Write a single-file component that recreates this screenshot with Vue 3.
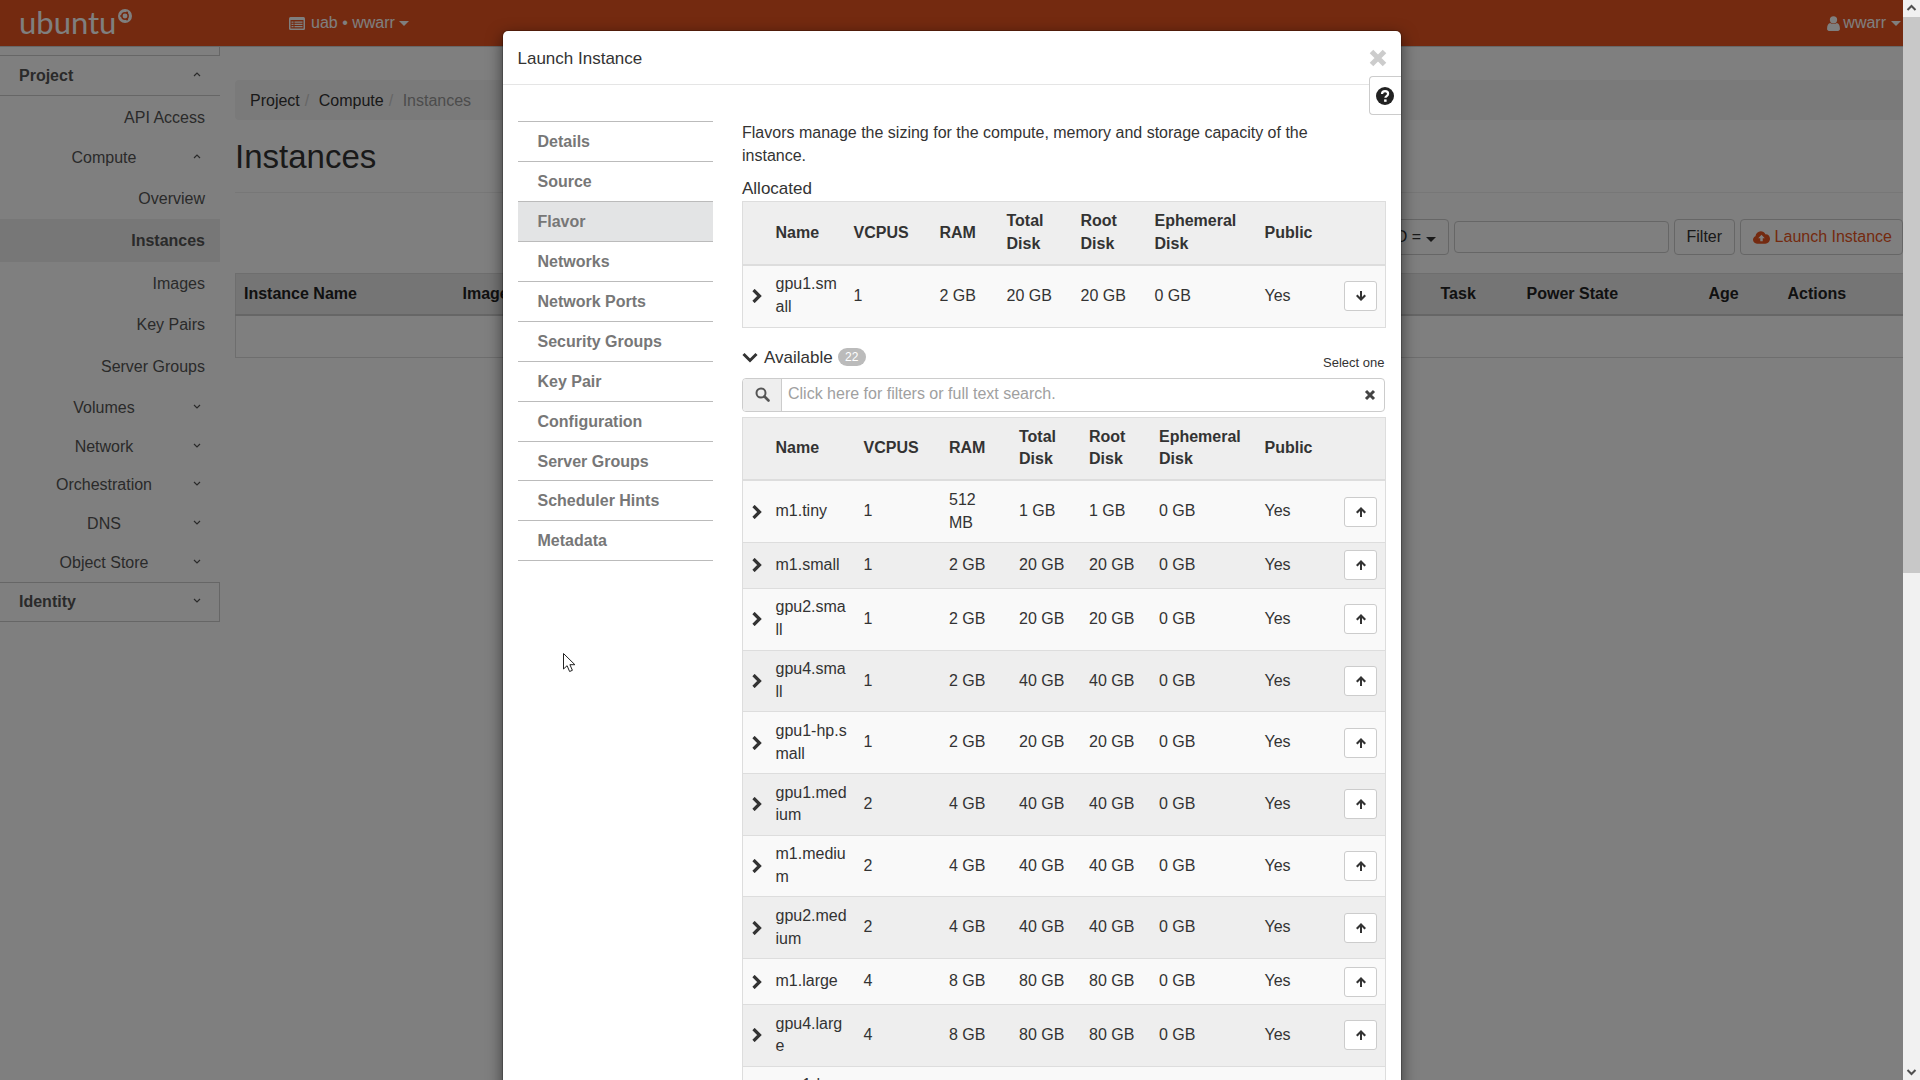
<script setup>
const sideItems = [
  { label: 'API Access', kind: 'link', h: 41 },
  { label: 'Compute', kind: 'group', open: true, h: 40 },
  { label: 'Overview', kind: 'link', h: 42 },
  { label: 'Instances', kind: 'link', active: true, h: 43 },
  { label: 'Images', kind: 'link', h: 41 },
  { label: 'Key Pairs', kind: 'link', h: 42 },
  { label: 'Server Groups', kind: 'link', h: 42 },
  { label: 'Volumes', kind: 'group', h: 40 },
  { label: 'Network', kind: 'group', h: 38 },
  { label: 'Orchestration', kind: 'group', h: 38 },
  { label: 'DNS', kind: 'group', h: 39 },
  { label: 'Object Store', kind: 'group', h: 40 },
]

const mainCols = [
  { label: 'Instance Name', w: 219 },
  { label: 'Image Name', w: 978 },
  { label: 'Task', w: 86 },
  { label: 'Power State', w: 182 },
  { label: 'Age', w: 79 },
  { label: 'Actions', w: 124 },
]

const steps = ['Details', 'Source', 'Flavor', 'Networks', 'Network Ports', 'Security Groups', 'Key Pair', 'Configuration', 'Server Groups', 'Scheduler Hints', 'Metadata']

const allocCols = [25, 78, 86, 67, 74, 74, 110, 78, 51]
const availCols = [25, 88, 85.5, 70, 70, 70, 105.5, 78, 51]

const flavors = [
  ['m1.tiny', 1, '512 MB', '1 GB', '1 GB'],
  ['m1.small', 1, '2 GB', '20 GB', '20 GB'],
  ['gpu2.small', 1, '2 GB', '20 GB', '20 GB'],
  ['gpu4.small', 1, '2 GB', '40 GB', '40 GB'],
  ['gpu1-hp.small', 1, '2 GB', '20 GB', '20 GB'],
  ['gpu1.medium', 2, '4 GB', '40 GB', '40 GB'],
  ['m1.medium', 2, '4 GB', '40 GB', '40 GB'],
  ['gpu2.medium', 2, '4 GB', '40 GB', '40 GB'],
  ['m1.large', 4, '8 GB', '80 GB', '80 GB'],
  ['gpu4.large', 4, '8 GB', '80 GB', '80 GB'],
  ['gpu1-hp.medium', 2, '4 GB', '40 GB', '40 GB'],
]
</script>

<template>
  <div class="app">
    <div class="screen">
      <header class="navbar">
        <div class="brand">
          <span class="brand-name">ubuntu</span>
          <svg class="brand-mark" width="14" height="14" viewBox="0 0 14 14">
            <circle cx="7" cy="7" r="7" fill="#fff" />
            <circle cx="7" cy="7" r="3.2" fill="none" stroke="#e95420" stroke-width="1.5" />
            <circle cx="3.2" cy="7" r="1.1" fill="#e95420" />
            <circle cx="9" cy="3.6" r="1.1" fill="#e95420" />
            <circle cx="9" cy="10.4" r="1.1" fill="#e95420" />
          </svg>
        </div>
        <div class="nav-project">
          <svg width="16" height="13" viewBox="0 0 16 13">
            <rect width="16" height="13" rx="1.5" fill="#fff" />
            <path d="M1.5 3h13v8.5h-13z" fill="#e95420" />
            <path d="M2.5 4.5h2v1.2h-2zM5.5 4.5h8v1.2h-8zM2.5 6.8h2V8h-2zM5.5 6.8h8V8h-8zM2.5 9h2v1.2h-2zM5.5 9h8v1.2h-8z" fill="#fff" />
          </svg>
          <span>uab • wwarr</span>
          <i class="caret"></i>
        </div>
        <div class="nav-user">
          <svg width="13" height="15" viewBox="0 0 12 14">
            <circle cx="6" cy="3.6" r="3.4" fill="#fff" />
            <path d="M0 12.2c0-3.2.8-5.2 2.8-5.6 1.8 1.2 4.6 1.2 6.4 0 2 .4 2.8 2.4 2.8 5.6 0 1-.8 1.8-1.8 1.8H1.8C.8 14 0 13.2 0 12.2z" fill="#fff" />
          </svg>
          <span>wwarr</span>
          <i class="caret"></i>
        </div>
      </header>

      <div class="page">
        <aside class="sidebar">
          <div class="side-top"></div>
          <div class="side-head">
            <span>Project</span>
            <svg class="chev" width="8" height="5" viewBox="0 0 8 5"><path d="M1 4l3-3 3 3" /></svg>
          </div>
          <div
            v-for="item in sideItems"
            :key="item.label"
            class="side-row"
            :class="[`side-${item.kind}`, { 'is-active': item.active }]"
            :style="{ height: item.h + 'px' }"
          >
            <span class="side-label">{{ item.label }}</span>
            <svg v-if="item.kind === 'group'" class="chev" width="8" height="5" viewBox="0 0 8 5">
              <path :d="item.open ? 'M1 4l3-3 3 3' : 'M1 1l3 3 3-3'" />
            </svg>
          </div>
          <div class="side-head side-closed">
            <span>Identity</span>
            <svg class="chev" width="8" height="5" viewBox="0 0 8 5"><path d="M1 1l3 3 3-3" /></svg>
          </div>
        </aside>

        <main class="main">
          <div class="crumbs">
            <span>Project</span><i>/</i><span>Compute</span><i>/</i><span class="muted">Instances</span>
          </div>
          <h1 class="title">Instances</h1>
          <div class="toolbar">
            <button class="btn">Instance ID = <i class="caret"></i></button>
            <input class="filter-input" type="text" />
            <button class="btn">Filter</button>
            <button class="btn btn-launch">
              <svg width="17" height="13" viewBox="0 0 18 13">
                <path d="M4.2 13C2 13 0 11.2 0 8.9c0-1.7 1-3.2 2.6-3.8C3 2.3 5.3 0 8.2 0c2.2 0 4.100 1.300 5 3.200 2.700-.2 4.800 1.900 4.800 4.700 0 2.800-2.200 5.100-5 5.100z" fill="#e95420" />
                <path d="M9 3.500l3.500 3.700h-2.200v3.300H7.700V7.200H5.500z" fill="#fff" />
              </svg>
              Launch Instance
            </button>
          </div>
          <table class="main-table">
            <colgroup>
              <col v-for="col in mainCols" :key="col.label" :style="{ width: col.w + 'px' }" />
            </colgroup>
            <thead>
              <tr><th v-for="col in mainCols" :key="col.label">{{ col.label }}</th></tr>
            </thead>
            <tbody>
              <tr><td :colspan="mainCols.length"></td></tr>
            </tbody>
          </table>
        </main>
      </div>

      <div class="backdrop"></div>

      <div class="modal-wrap">
        <div class="modal">
          <div class="modal-head">
            <span class="modal-title">Launch Instance</span>
            <svg class="close-x" width="18" height="18" viewBox="0 0 18 18"><path d="M2.500 2.500l13 13M15.500 2.500l-13 13" /></svg>
          </div>
          <button class="help">
            <svg width="18" height="18" viewBox="0 0 18 18">
              <circle cx="9" cy="9" r="9" fill="#222" />
              <path d="M6 7c0-1.800 1.300-2.800 3.100-2.800 1.700 0 3 1 3 2.600 0 2.200-2.700 2.200-2.700 4" fill="none" stroke="#fff" stroke-width="2.200" />
              <rect x="8.100" y="12.400" width="2.500" height="2.400" fill="#fff" />
            </svg>
          </button>
          <div class="modal-body">
            <ul class="steps">
              <li v-for="step in steps" :key="step" :class="{ current: step === 'Flavor' }">{{ step }}</li>
            </ul>
            <section class="flavor">
              <p class="intro">Flavors manage the sizing for the compute, memory and storage capacity of the instance.</p>
              <div class="section-label allocated">Allocated</div>
              <table class="flavor-table">
                <colgroup>
                  <col v-for="(w, i) in allocCols" :key="i" :style="{ width: w + 'px' }" />
                </colgroup>
                <thead>
                  <tr>
                    <th></th><th>Name</th><th>VCPUS</th><th>RAM</th><th>Total Disk</th><th>Root Disk</th><th>Ephemeral Disk</th><th>Public</th><th></th>
                  </tr>
                </thead>
                <tbody>
                  <tr>
                    <td class="expander">
                      <svg width="11" height="14" viewBox="0 0 11 14"><path d="M2.500 1L8.500 7l-6 6" /></svg>
                    </td>
                    <td class="name">gpu1.small</td>
                    <td>1</td>
                    <td>2 GB</td>
                    <td>20 GB</td>
                    <td>20 GB</td>
                    <td>0 GB</td>
                    <td>Yes</td>
                    <td class="action">
                      <button class="move">
                        <svg width="12" height="12" viewBox="0 0 12 12"><path d="M6 11l5-5-1.500-1.500L7 7V1H5v6L2.500 4.500 1 6z" /></svg>
                      </button>
                    </td>
                  </tr>
                </tbody>
              </table>

              <div class="avail-head">
                <div class="avail-title">
                  <svg width="16" height="11" viewBox="0 0 16 11"><path d="M1.500 2L8 8.500 14.500 2" /></svg>
                  <span class="section-label">Available</span>
                  <span class="badge">22</span>
                </div>
                <span class="select-one">Select one</span>
              </div>
              <div class="search">
                <span class="search-addon">
                  <svg width="15" height="15" viewBox="0 0 15 15">
                    <circle cx="6" cy="6" r="4.500" fill="none" stroke="#555" stroke-width="2" />
                    <path d="M9.500 9.500l4 4" stroke="#555" stroke-width="2.600" stroke-linecap="round" />
                  </svg>
                </span>
                <span class="search-text">Click here for filters or full text search.</span>
                <svg class="search-clear" width="12" height="12" viewBox="0 0 12 12"><path d="M2 2l8 8M10 2l-8 8" /></svg>
              </div>
              <table class="flavor-table">
                <colgroup>
                  <col v-for="(w, i) in availCols" :key="i" :style="{ width: w + 'px' }" />
                </colgroup>
                <thead>
                  <tr>
                    <th></th><th>Name</th><th>VCPUS</th><th>RAM</th><th>Total Disk</th><th>Root Disk</th><th>Ephemeral Disk</th><th>Public</th><th></th>
                  </tr>
                </thead>
                <tbody>
                  <tr v-for="f in flavors" :key="f[0]">
                    <td class="expander">
                      <svg width="11" height="14" viewBox="0 0 11 14"><path d="M2.500 1L8.500 7l-6 6" /></svg>
                    </td>
                    <td class="name">{{ f[0] }}</td>
                    <td>{{ f[1] }}</td>
                    <td>{{ f[2] }}</td>
                    <td>{{ f[3] }}</td>
                    <td>{{ f[4] }}</td>
                    <td>0 GB</td>
                    <td>Yes</td>
                    <td class="action">
                      <button class="move">
                        <svg width="12" height="12" viewBox="0 0 12 12"><path d="M6 1L1 6l1.500 1.500L5 5v6h2V5l2.500 2.500L11 6z" /></svg>
                      </button>
                    </td>
                  </tr>
                </tbody>
              </table>
            </section>
          </div>
        </div>
      </div>

      <svg class="cursor" width="13" height="20" viewBox="0 0 13 20">
        <path d="M.5.500v15.500l3.600-3.300 2.500 5.800 2.800-1.200-2.500-5.600h5z" fill="#fff" stroke="#222" stroke-width="1" />
      </svg>
    </div>

    <div class="scrollbar">
      <svg class="sb-arrow" width="17" height="17" viewBox="0 0 17 17"><path d="M4.500 10l4-4 4 4" /></svg>
      <div class="sb-track"><div class="sb-thumb"></div></div>
      <svg class="sb-arrow" width="17" height="17" viewBox="0 0 17 17"><path d="M4.500 7l4 4 4-4" /></svg>
    </div>
  </div>
</template>

<style>
html,
body {
  margin: 0;
  overflow: hidden;
}
</style>

<style scoped>
.app {
  display: flex;
  width: 1920px;
  height: 1080px;
  overflow: hidden;
  background: #fff;
  color: #333;
  font-family: 'Liberation Sans', Arial, sans-serif;
  font-size: 16px;
  line-height: 1.42857;
}
.screen {
  position: relative;
  flex: 1;
  min-width: 0;
  overflow: hidden;
}

.navbar {
  display: flex;
  align-items: center;
  height: 47px;
  background: #e95420;
  color: #fff;
  border-bottom: 1px solid #d0d0d0;
  box-sizing: border-box;
  padding: 1px 0 0 19px;
}
.brand {
  display: flex;
  align-items: flex-start;
  width: 270px;
  height: 46px;
}
.brand-name {
  font-family: Lato, 'Open Sans', sans-serif;
  font-size: 31px;
  font-weight: 400;
  line-height: 42px;
}
.brand-mark {
  margin: 8px 0 0 2px;
}
.nav-project,
.nav-user {
  display: flex;
  align-items: center;
  gap: 6px;
}
.nav-project .caret {
  margin-left: -2px;
}
.nav-user {
  margin-left: auto;
  margin-right: 2px;
  gap: 3px;
}
.nav-user .caret {
  margin-left: 2px;
}
.caret {
  display: inline-block;
  width: 0;
  height: 0;
  border-top: 5px solid;
  border-left: 5px solid transparent;
  border-right: 5px solid transparent;
}

.page {
  display: flex;
}
.sidebar {
  width: 220px;
  flex: none;
  color: #555;
}
.side-top {
  height: 8px;
  border-bottom: 1px solid #ccc;
  border-right: 1px solid #ccc;
}
.side-head {
  display: flex;
  align-items: center;
  justify-content: space-between;
  height: 38px;
  padding: 1px 19px 0;
  border-bottom: 1px solid #ccc;
  font-weight: 700;
}
.side-closed {
  height: 37px;
  border: 1px solid #ccc;
  border-left: 0;
  padding-right: 18px;
}
.chev {
  fill: none;
  stroke: #555;
  stroke-width: 1.2;
  margin-top: -4px;
}
.side-row {
  display: flex;
  align-items: center;
  box-sizing: border-box;
  padding: 3px 15px 0 0;
}
.side-link {
  justify-content: flex-end;
}
.side-group {
  padding-right: 19px;
}
.side-group .side-label {
  flex: 1;
  margin-left: 15px;
  text-align: center;
}
.is-active {
  padding-top: 1px;
  background: #eee;
  font-weight: 700;
}

.main {
  flex: 1;
  min-width: 0;
  padding: 33px 0 0 15px;
}
.crumbs {
  display: flex;
  align-items: center;
  box-sizing: border-box;
  height: 40px;
  padding: 2px 0 0 15px;
  background: #f5f5f5;
  border-radius: 4px 0 0 4px;
}
.crumbs i {
  font-style: normal;
  color: #ccc;
  padding: 0 5px;
  margin-right: 4.5px;
}
.muted {
  color: #999;
}
.title {
  margin: 0;
  height: 72px;
  font-size: 33px;
  font-weight: 400;
  line-height: 74px;
  color: #333;
  border-bottom: 1px solid #eee;
}
.toolbar {
  display: flex;
  align-items: center;
  justify-content: flex-end;
  gap: 5px;
  margin-top: 26px;
  height: 36px;
}
.btn {
  height: 36px;
  padding: 0 12px;
  border: 1px solid #ccc;
  border-radius: 4px;
  background: #fff;
  color: #333;
  font: inherit;
  white-space: nowrap;
}
.btn-launch {
  display: flex;
  align-items: center;
  gap: 4.5px;
  padding-right: 10px;
  color: #e95420;
}
.filter-input {
  width: 215px;
  height: 32px;
  box-sizing: border-box;
  border: 1px solid #ccc;
  border-radius: 4px;
  background: #fff;
}
.main-table {
  width: 100%;
  margin-top: 18px;
  table-layout: fixed;
  border-collapse: collapse;
  border: 1px solid #ddd;
}
.main-table th {
  height: 40px;
  padding: 0 8px;
  background: #ebebeb;
  border-bottom: 2px solid #ccc;
  color: #222;
  text-align: left;
  white-space: nowrap;
  overflow: hidden;
}
.main-table td {
  height: 39px;
}

.backdrop {
  position: absolute;
  inset: 0;
  background: rgba(0, 0, 0, 0.5);
}
.modal-wrap {
  position: absolute;
  inset: 0;
  overflow: hidden;
}
.modal {
  position: relative;
  width: 900px;
  margin: 30px auto 0;
  box-sizing: border-box;
  background: #fff;
  border: 1px solid rgba(0, 0, 0, 0.2);
  border-radius: 6px;
  box-shadow: 0 5px 15px rgba(0, 0, 0, 0.5);
  background-clip: padding-box;
}
.modal-head {
  display: flex;
  align-items: center;
  justify-content: space-between;
  height: 54px;
  box-sizing: border-box;
  padding: 0 15px;
  border-bottom: 1px solid #e5e5e5;
}
.modal-title {
  margin-top: 3px;
  font-size: 17px;
}
.close-x {
  margin-right: -1px;
  fill: none;
  stroke: #ccc;
  stroke-width: 5;
}
.help {
  position: absolute;
  top: 45px;
  right: 0;
  display: flex;
  align-items: center;
  justify-content: center;
  width: 32px;
  height: 39px;
  padding: 0;
  background: #fff;
  border: 1px solid #ccc;
  border-right: 0;
  border-radius: 4px 0 0 4px;
}
.modal-body {
  display: flex;
  gap: 29.5px;
  padding: 36px 16px 0 15px;
}
.steps {
  flex: none;
  width: 195px;
  margin: 0;
  padding: 0;
  list-style: none;
  border-top: 1px solid #bbb;
  align-self: flex-start;
}
.steps li {
  height: 38.95px;
  padding-left: 20px;
  border-bottom: 1px solid #bbb;
  color: #777;
  font-weight: 700;
  line-height: 39px;
}
.steps .current {
  background: #e3e4e5;
}
.flavor {
  flex: 1;
  min-width: 0;
  padding-top: 1px;
}
.intro {
  max-width: 600px;
  margin: 0 0 10px;
}
.section-label {
  font-size: 17px;
  line-height: 23px;
}
.allocated {
  margin: -1px 0 1.5px;
}
.flavor-table {
  width: 100%;
  table-layout: fixed;
  border-collapse: collapse;
  border: 1px solid #ddd;
}
.flavor-table th {
  padding: 8px;
  background: #eee;
  border-bottom: 2px solid #ddd;
  text-align: left;
  font-weight: 700;
  vertical-align: middle;
}
.flavor-table td {
  padding: 7.5px 8px;
  border-top: 1px solid #ddd;
  vertical-align: middle;
  text-align: left;
}
.flavor-table tbody tr:nth-child(odd) {
  background: #f9f9f9;
}
.flavor-table tbody tr:nth-child(even) {
  background: #eee;
}
.flavor-table .name {
  word-break: break-all;
}
.flavor-table .expander {
  padding: 0 0 0 8px;
}
.expander svg {
  display: block;
  fill: none;
  stroke: #333;
  stroke-width: 3.2;
}
.flavor-table .action {
  padding: 7.5px 8px 7.5px 0;
  text-align: right;
}
.move {
  display: inline-flex;
  align-items: center;
  justify-content: center;
  width: 33px;
  height: 30px;
  padding: 0;
  vertical-align: middle;
  background: #fff;
  border: 1px solid #ccc;
  border-radius: 3px;
}
.move svg {
  fill: #333;
}
.avail-head {
  display: flex;
  align-items: flex-end;
  justify-content: space-between;
  margin-top: 18px;
}
.avail-title {
  display: flex;
  align-items: center;
  gap: 6px;
}
.avail-title svg {
  fill: none;
  stroke: #333;
  stroke-width: 3;
}
.badge {
  min-width: 28px;
  box-sizing: border-box;
  padding: 0 7px;
  margin-left: -1px;
  border-radius: 10px;
  background: #bbb;
  color: #fff;
  font-size: 12px;
  line-height: 18px;
  text-align: center;
}
.select-one {
  position: relative;
  top: 2px;
  font-size: 13px;
  line-height: 17px;
}
.search {
  display: flex;
  align-items: center;
  height: 32px;
  margin: 9px 0 5px;
  border: 1px solid #ccc;
  border-radius: 4px;
  overflow: hidden;
}
.search-addon {
  display: flex;
  align-items: center;
  justify-content: center;
  width: 38px;
  height: 100%;
  flex: none;
  background: #eee;
  border-right: 1px solid #ccc;
}
.search-text {
  flex: 1;
  padding-left: 6px;
  color: #a0a0a0;
}
.search-clear {
  margin-right: 8px;
  fill: none;
  stroke: #444;
  stroke-width: 3;
}

.cursor {
  position: absolute;
  left: 563px;
  top: 653px;
}

.scrollbar {
  display: flex;
  flex-direction: column;
  width: 17px;
  flex: none;
  background: #f1f1f1;
}
.sb-arrow {
  flex: none;
  fill: none;
  stroke: #505050;
  stroke-width: 2;
}
.sb-track {
  flex: 1;
}
.sb-thumb {
  height: 556px;
  background: #c8c8c8;
}
</style>
